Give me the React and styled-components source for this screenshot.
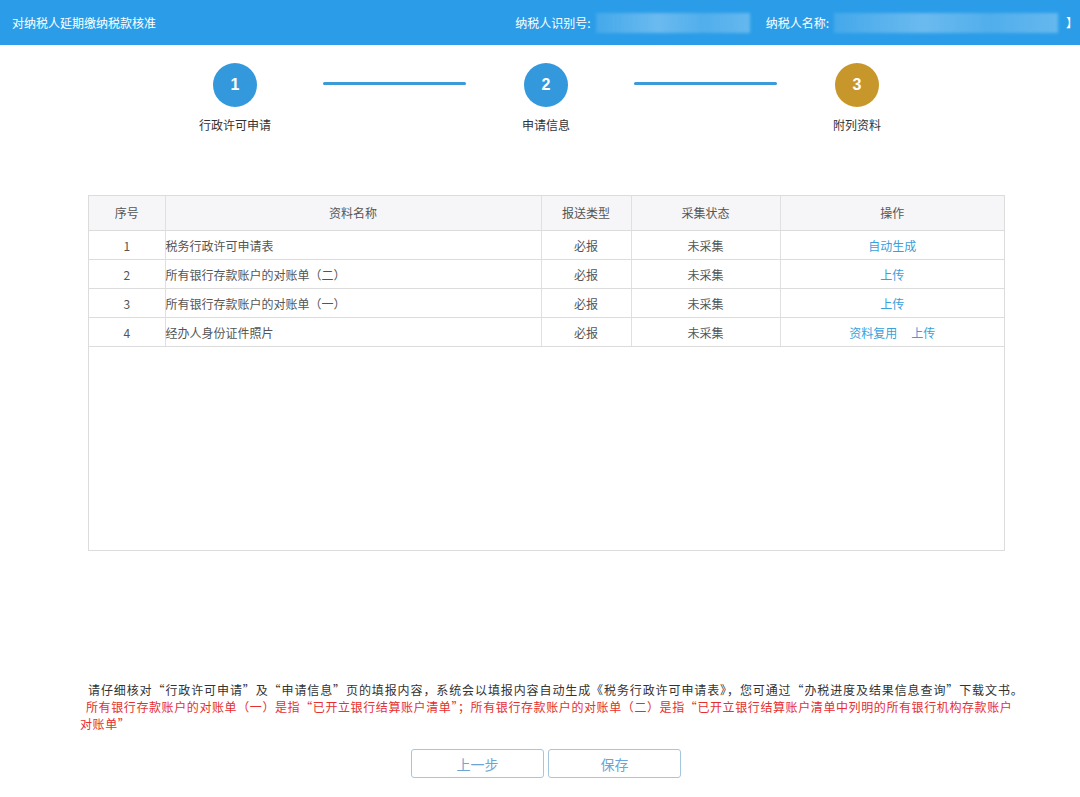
import React from 'react'
import styled, {createGlobalStyle} from 'styled-components'

const GlobalStyle = createGlobalStyle`
  body {
    margin: 0;
    background: #fff;
    font-family: "Noto Sans CJK SC", "Noto Sans", sans-serif;
  }
`

const Page = styled.div`
  width: 1080px;
  height: 797px;
  display: flex;
  flex-direction: column;
`

const Header = styled.div`
  height: 45px;
  background-color: #2b9de8;
  display: flex;
  align-items: center;
  padding: 0 0 0 12px;
  color: #fff;
  font-size: 12px;
`

const Title = styled.div`
  flex: 1;
`

const Field = styled.div`
  display: flex;
  align-items: center;
  margin-right: ${({gap}) => gap}px;
`

const Blur = styled.div`
  width: ${({w}) => w}px;
  height: 20px;
  margin-left: 5px;
  background: linear-gradient(90deg, rgba(255,255,255,0.12), rgba(255,255,255,0.3) 40%, rgba(255,255,255,0.18) 70%, rgba(255,255,255,0.28));
  filter: blur(1.5px);
`

const Bracket = styled.span`
  margin-left: 8px;
`

const Stepper = styled.div`
  display: flex;
  padding: 18px 0 0 191px;
`

const Step = styled.div`
  width: 88px;
  display: flex;
  flex-direction: column;
  align-items: center;
`

const Circle = styled.div`
  width: 44px;
  height: 44px;
  border-radius: 50%;
  background-color: ${({color}) => color};
  color: #fff;
  font-family: "Liberation Sans", Arial, sans-serif;
  font-weight: bold;
  font-size: 16px;
  display: flex;
  align-items: center;
  justify-content: center;
`

const StepLabel = styled.div`
  margin-top: 9px;
  font-size: 12px;
  color: #333;
  white-space: nowrap;
`

const Line = styled.div`
  width: 143px;
  height: 3px;
  border-radius: 2px;
  background-color: #3b9ad9;
  margin: 19px 36px 0 44px;
`

const TableBox = styled.div`
  margin: 62px 0 0 88px;
  width: 915px;
  height: 354px;
  border: 1px solid #dcdcdc;
`

const Table = styled.table`
  width: 100%;
  border-collapse: collapse;
  font-size: 12px;
  color: #555;
  table-layout: fixed;
`

const Th = styled.th`
  height: 34px;
  padding: 0;
  line-height: 16px;
  font-weight: normal;
  background-color: #f6f6f8;
  border-left: 1px solid #e0e0e0;
  border-bottom: 1px solid #dcdcdc;
  &:first-child {
    border-left: none;
  }
`

const Td = styled.td`
  height: 28px;
  padding: 0;
  text-align: ${({left}) => (left ? 'left' : 'center')};
  border-left: 1px solid #e0e0e0;
  border-bottom: 1px solid #dcdcdc;
  &:first-child {
    border-left: none;
  }
`

const Link = styled.span`
  color: #3aa0db;
  margin: 0 7px;
`

const Notes = styled.div`
  margin-top: 130px;
  padding-left: 80px;
  font-size: 12px;
  line-height: 17px;
`

const Note = styled.div`
  white-space: nowrap;
  letter-spacing: ${({spacing}) => spacing}px;
  color: ${({red}) => (red ? '#e62e2e' : '#333')};
  padding-left: ${({indent}) => indent}px;
`

const Buttons = styled.div`
  display: flex;
  gap: 4px;
  padding: 17px 0 0 411px;
`

const Button = styled.button`
  width: 133px;
  height: 29px;
  border: 1px solid #a6c6de;
  border-radius: 3px;
  background: #fff;
  color: #6aa5d6;
  font-size: 14px;
  font-family: "Noto Sans CJK SC", sans-serif;
`

const rows = [
  {no: 1, name: '税务行政许可申请表', ops: ['自动生成']},
  {no: 2, name: '所有银行存款账户的对账单（二）', ops: ['上传']},
  {no: 3, name: '所有银行存款账户的对账单（一）', ops: ['上传']},
  {no: 4, name: '经办人身份证件照片', ops: ['资料复用', '上传']},
]

const steps = [
  {n: 1, label: '行政许可申请', color: '#3399dc'},
  {n: 2, label: '申请信息', color: '#3399dc'},
  {n: 3, label: '附列资料', color: '#c8972b'},
]

export default function App() {
  return (
    <Page>
      <GlobalStyle />
      <Header>
        <Title>对纳税人延期缴纳税款核准</Title>
        <Field gap={16}>
          纳税人识别号:
          <Blur w={154} />
        </Field>
        <Field gap={2}>
          纳税人名称:
          <Blur w={224} />
          <Bracket>】</Bracket>
        </Field>
      </Header>

      <Stepper>
        {steps.map((s, i) => (
          <React.Fragment key={s.n}>
            {i > 0 && <Line />}
            <Step>
              <Circle color={s.color}>{s.n}</Circle>
              <StepLabel>{s.label}</StepLabel>
            </Step>
          </React.Fragment>
        ))}
      </Stepper>

      <TableBox>
        <Table>
          <colgroup>
            <col style={{width: 76}} />
            <col style={{width: 376}} />
            <col style={{width: 90}} />
            <col style={{width: 149}} />
            <col />
          </colgroup>
          <thead>
            <tr>
              <Th>序号</Th>
              <Th>资料名称</Th>
              <Th>报送类型</Th>
              <Th>采集状态</Th>
              <Th>操作</Th>
            </tr>
          </thead>
          <tbody>
            {rows.map((r) => (
              <tr key={r.no}>
                <Td>{r.no}</Td>
                <Td left>{r.name}</Td>
                <Td>必报</Td>
                <Td>未采集</Td>
                <Td>
                  {r.ops.map((o) => (
                    <Link key={o}>{o}</Link>
                  ))}
                </Td>
              </tr>
            ))}
          </tbody>
        </Table>
      </TableBox>

      <Notes>
        <Note indent={8} spacing={0.9}>
          请仔细核对“行政许可申请”及“申请信息”页的填报内容，系统会以填报内容自动生成《税务行政许可申请表》，您可通过“办税进度及结果信息查询”下载文书。
        </Note>
        <Note red indent={6} spacing={0.6}>
          所有银行存款账户的对账单（一）是指“已开立银行结算账户清单”；所有银行存款账户的对账单（二）是指“已开立银行结算账户清单中列明的所有银行机构存款账户
        </Note>
        <Note red indent={0} spacing={0.6}>
          对账单”
        </Note>
      </Notes>

      <Buttons>
        <Button>上一步</Button>
        <Button>保存</Button>
      </Buttons>
    </Page>
  )
}
